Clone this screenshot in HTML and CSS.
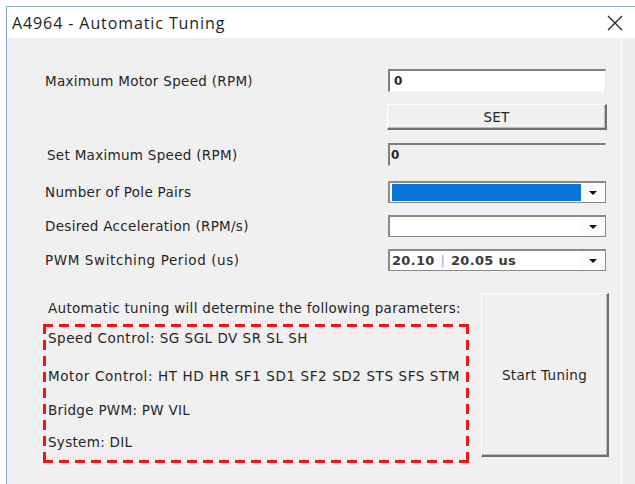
FILE: index.html
```html
<!DOCTYPE html>
<html lang="en">
<head>
<meta charset="utf-8">
<title>A4964 - Automatic Tuning</title>
<link rel="stylesheet" href="styles.css">
</head>
<body>
<div class="window">
  <header class="titlebar">
    <span class="title">A4964 - Automatic Tuning</span>
    <button class="close" aria-label="Close">
      <svg width="16" height="16" viewBox="0 0 16 16"><path d="M1 1 L15 15 M15 1 L1 15" stroke="#222" stroke-width="1.3" fill="none"/></svg>
    </button>
  </header>
  <main class="panel">
    <div class="form">
      <div class="row r1">
        <label class="lbl">Maximum Motor Speed (RPM)</label>
        <div class="field">0</div>
      </div>
      <div class="row r2">
        <span class="lbl"></span>
        <button class="btn set">SET</button>
      </div>
      <div class="row r3">
        <label class="lbl lbl-shift">Set Maximum Speed (RPM)</label>
        <div class="field readonly">0</div>
      </div>
      <div class="row r4">
        <label class="lbl">Number of Pole Pairs</label>
        <div class="combo"><span class="value selected"></span><span class="arrow"></span></div>
      </div>
      <div class="row r5">
        <label class="lbl">Desired Acceleration (RPM/s)</label>
        <div class="combo"><span class="value"></span><span class="arrow"></span></div>
      </div>
      <div class="row r6">
        <label class="lbl wide">PWM Switching Period (us)</label>
        <div class="combo"><span class="value">20.10 <span class="sep">|</span> 20.05 us</span><span class="arrow"></span></div>
      </div>
    </div>
    <div class="tuning">
      <div class="params">
        <p class="intro">Automatic tuning will determine the following parameters:</p>
        <div class="dashed">
          <p class="p1">Speed Control: SG SGL DV SR SL SH</p>
          <p class="p2">Motor Control: HT HD HR SF1 SD1 SF2 SD2 STS SFS STM</p>
          <p class="p3">Bridge PWM: PW VIL</p>
          <p class="p4">System: DIL</p>
        </div>
      </div>
      <button class="btn start">Start Tuning</button>
    </div>
  </main>
</div>
</body>
</html>
```
FILE: styles.css
```css
html, body {
  margin: 0;
  padding: 0;
  background: #ffffff;
}

body {
  width: 635px;
  height: 484px;
  overflow: hidden;
  padding-top: 6px;
  box-sizing: border-box;
}

.window {
  margin-left: 6px;
  height: 478px;
  border-top: 1px solid #8fb4dc;
  border-left: 1px solid #7ea8d6;
  background: #eceeee;
  display: flex;
  flex-direction: column;
}

.titlebar {
  height: 31px;
  background: #ffffff;
  display: flex;
  align-items: center;
  justify-content: space-between;
  padding: 0 12px 0 5px;
}

.title {
  font-family: "Open Sans", "Noto Sans", sans-serif;
  font-size: 16px;
  letter-spacing: 0.9px;
  color: #1e1e1e;
}

.close {
  border: 0;
  background: transparent;
  padding: 0;
  width: 16px;
  height: 16px;
  display: flex;
}

.panel {
  flex: 1;
  width: 613px;
  background: #f0f0f0;
  border-right: 3px solid #f8f9f5;
  font-family: "DejaVu Sans", Verdana, sans-serif;
  font-size: 13.5px;
  letter-spacing: 0.3px;
  color: #262626;
  display: flex;
  flex-direction: column;
}

.form {
  padding: 31px 0 0 38px;
  display: flex;
  flex-direction: column;
}

.row {
  display: flex;
  align-items: center;
}

.r2 { margin-top: 12px; }
.r3 { margin-top: 13px; }
.r4 { margin-top: 15px; }
.r5 { margin-top: 12px; }
.r6 { margin-top: 12px; }

.lbl {
  width: 343px;
  flex: none;
}

.lbl.wide { letter-spacing: 0.6px; }

.lbl-shift { padding-left: 2px; width: 341px; }

.field {
  width: 218px;
  height: 23px;
  box-sizing: border-box;
  background: #ffffff;
  border-top: 2px solid #808080;
  border-left: 2px solid #808080;
  border-right: 1px solid #e4e4e4;
  border-bottom: 1px solid #f4f4f4;
  padding: 0 0 0 4px;
  display: flex;
  align-items: center;
  font-size: 12px;
  font-weight: bold;
}

.field.readonly {
  background: #f0f0f0;
  padding-left: 1px;
  border-right-color: #f0f0f0;
  border-bottom-color: #f0f0f0;
}

.btn {
  font-family: "DejaVu Sans", Verdana, sans-serif;
  font-size: 13.5px;
  letter-spacing: 0.3px;
  color: #262626;
  background: #f0f0f0;
  border-top: 1px solid #ffffff;
  border-left: 1px solid #ffffff;
  border-right: 2px solid #707070;
  border-bottom: 2px solid #707070;
  box-shadow: inset -1px -1px 0 #bcbcbc;
  padding: 0;
}

.set {
  width: 220px;
  height: 26px;
  margin-left: -1px;
}

.combo {
  width: 218px;
  height: 22px;
  box-sizing: border-box;
  background: #ffffff;
  border: 2px solid #8a8a8a;
  border-right-width: 1px;
  border-bottom-width: 1px;
  display: flex;
  align-items: stretch;
  padding: 1px 0 1px 1px;
}

.value {
  flex: 1;
  display: flex;
  align-items: center;
  padding-left: 1px;
  font-size: 13px;
  letter-spacing: 0.3px;
  font-weight: bold;
  color: #3a3a3a;
  white-space: pre;
}

.value.selected {
  background: #0a74d6;
  margin: 0 0 0 1px;
}

.sep {
  color: #8aa8c8;
  font-weight: normal;
  margin: 0 1px;
}

.arrow {
  width: 24px;
  flex: none;
  display: flex;
  align-items: center;
  justify-content: center;
  background: #fbfbfb;
}

.arrow::after {
  content: "";
  width: 0;
  height: 0;
  border-left: 4px solid transparent;
  border-right: 4px solid transparent;
  border-top: 4px solid #111;
  margin-top: 1px;
}

.tuning {
  display: flex;
  padding: 29px 0 0 36px;
}

.params {
  width: 438px;
  flex: none;
}

.intro {
  margin: 0 0 8px 5px;
  line-height: 16px;
}

/* red dashed outline drawn with gradients for long dashes */
.dashed {
  width: 426px;
  height: 139px;
  box-sizing: border-box;
  padding: 6px 0 0 5px;
  background:
    repeating-linear-gradient(90deg, #ee1515 0 10px, transparent 10px 16px) left top / 100% 3px no-repeat,
    repeating-linear-gradient(90deg, #ee1515 0 10px, transparent 10px 16px) left bottom / 100% 3px no-repeat,
    repeating-linear-gradient(180deg, #ee1515 0 10px, transparent 10px 16px) left top / 3px 100% no-repeat,
    repeating-linear-gradient(180deg, #ee1515 0 10px, transparent 10px 16px) right top / 3px 100% no-repeat;
}

.dashed p {
  margin: 0;
  line-height: 16px;
}

.p1 { letter-spacing: 0.5px; }
.p2 { margin-top: 22px !important; letter-spacing: 0.6px; }
.p3 { margin-top: 18px !important; }
.p4 { margin-top: 16px !important; }

.start {
  width: 128px;
  height: 164px;
  margin-top: -7px;
  margin-left: 0;
}
```
